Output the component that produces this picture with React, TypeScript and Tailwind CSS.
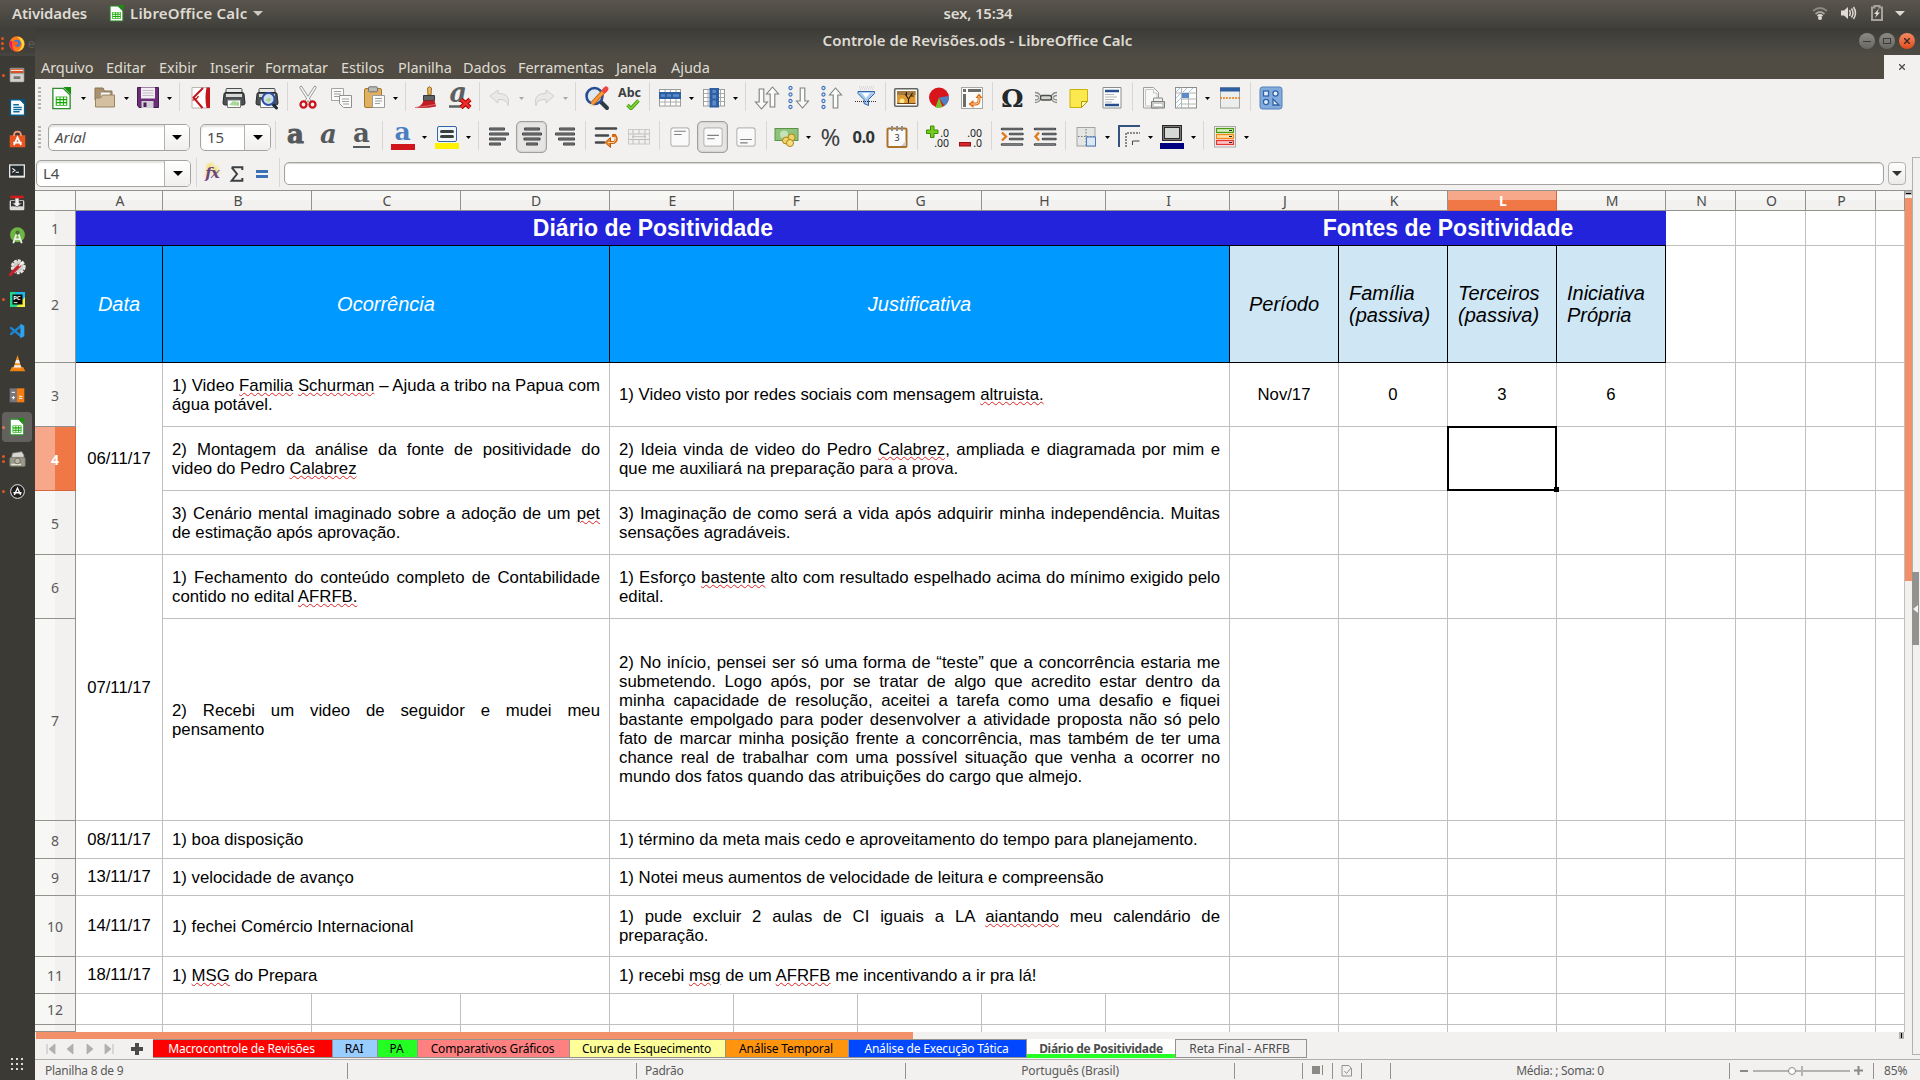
import React from "react";

type Kids = { children?: React.ReactNode };

const Svg = ({ s = 24, children }: { s?: number } & Kids) => (
  <svg width={s} height={s} viewBox="0 0 24 24" fill="none" className="block shrink-0 overflow-visible">
    {children}
  </svg>
);

/* ---------- shared document icon ---------- */
const CalcDoc = ({ s = 24 }: { s?: number }) => (
  <Svg s={s}>
    <path d="M3 1.5h11l7 7v14H3z" fill="#fdfdfd" stroke="#2e8b2e" strokeWidth="1.4" />
    <path d="M14 0h8v8z" fill="#17930b" />
    <rect x="6" y="10" width="12" height="9.5" fill="#18a303" />
    <path d="M7 11.6h3M11 11.6h2.5M14.5 11.6H17M7 14.7h3M11 14.7h2.5M14.5 14.7H17M7 17.9h3M11 17.9h2.5M14.5 17.9H17" stroke="#eaffea" strokeWidth="1.7" />
  </Svg>
);

/* ---------- toolbar building blocks ---------- */
const Slot = ({ children }: Kids) => <div className="flex h-8 w-[33px] shrink-0 items-center justify-center">{children}</div>;
const Pressed = ({ children }: Kids) => (
  <div className="flex h-8 w-[33px] shrink-0 items-center justify-center">
    <div className="flex h-8 w-[31px] items-center justify-center rounded-[5px] border border-[#a09f9b] bg-[#e6e5e3] shadow-[inset_0_0_2px_#aaa]">{children}</div>
  </div>
);
const Arrow = ({ dim, narrow }: { dim?: boolean; narrow?: boolean }) => (
  <div className={`flex h-8 shrink-0 items-center justify-center ${narrow ? "w-[10px]" : "w-[11px]"}`}>
    <svg width="5" height="3" className="block">
      <path d="M0 0h5L2.5 3z" fill={dim ? "#a9a8a6" : "#000"} />
    </svg>
  </div>
);
const Sep = ({ w = "w-2" }: { w?: string }) => (
  <div className={`flex h-8 shrink-0 justify-center ${w}`}>
    <div className="h-[29px] w-px bg-[#d9d7d5]" />
  </div>
);
const Grip = () => (
  <div className="flex h-6 w-[10px] shrink-0 flex-col items-start gap-[2px] pl-[3px] pt-px">
    {[0, 1, 2, 3, 4, 5].map((i) => (
      <div key={i} className="h-[2px] w-[3px] bg-[#b5b3b0]" />
    ))}
  </div>
);

/* ---------- standard toolbar icons ---------- */
const OpenIcon = () => (
  <Svg>
    <path d="M2 2h8l1.5 3H19v9H2z" fill="#a8916c" stroke="#8b7350" />
    <path d="M8 6.500h9v6H8z" fill="#fff" stroke="#b9b9b9" strokeWidth=".8" />
    <path d="M2.500 21V12h5l2-3H21.500v12z" fill="#d4c0a0" stroke="#9a8360" />
  </Svg>
);
const SaveIcon = () => (
  <Svg>
    <path d="M1.500 1.500h21v20H3l-1.500-2z" fill="#6b2f77" stroke="#421c4c" />
    <rect x="5" y="1.500" width="14" height="11" fill="#f3eef4" />
    <path d="M6.500 4.500h11M6.500 7h11M6.500 9.500h11" stroke="#c3bbc6" />
    <rect x="5.500" y="15" width="12" height="7" fill="#d5d0d8" />
    <rect x="7.500" y="16.500" width="3" height="4.500" fill="#4b2155" />
  </Svg>
);
const PdfIcon = () => (
  <Svg>
    <path d="M3 1.500h17.500v20.500H3z" fill="#fff" stroke="#b8b7b4" />
    <path d="M17.500 1.500h3.500v20.500h-3.500q-2-10 0-20.500z" fill="#c3161c" />
    <path d="M14 2L4.500 11.500 13.500 22" stroke="#c3161c" strokeWidth="2" />
    <path d="M3.500 14q4 0 6-4" stroke="#c3161c" strokeWidth="1.300" />
  </Svg>
);
const PrinterBody = () => (
  <>
    <rect x="4" y="2.500" width="16" height="6" rx="1" fill="#e8e8e6" stroke="#4a4f50" />
    <path d="M2 8q0-1.500 2-1.500h16q2 0 2 1.500l1 9q0 2-2 2H3q-2 0-2-2z" fill="#4b5152" stroke="#262a2b" />
    <path d="M4 8h16v3H4z" fill="#d8dad8" />
    <path d="M5.500 14h13v7.500h-13z" fill="#fff" stroke="#777" />
  </>
);
const PrintIcon = () => (
  <Svg>
    <PrinterBody />
    <path d="M7 19l4-4 6 1v4z" fill="#a8d899" />
  </Svg>
);
const PreviewIcon = () => (
  <Svg>
    <PrinterBody />
    <path d="M17 17.500l4.500 4.500" stroke="#1c2a38" strokeWidth="3" strokeLinecap="round" />
    <circle cx="13.500" cy="13" r="6" fill="#cfe0ea" stroke="#2d4fa8" strokeWidth="2" />
    <path d="M10.500 14.500l3-3 3 1.500-2 3z" fill="#a9d29d" />
  </Svg>
);
const CutIcon = () => (
  <Svg>
    <path d="M5 1.500l9 14M19 1.500l-9 14" stroke="#8a8d8b" strokeWidth="3.200" strokeLinecap="round" />
    <path d="M5 1.500l9 14M19 1.500l-9 14" stroke="#f4f4f3" strokeWidth="1.600" strokeLinecap="round" />
    <ellipse cx="7.500" cy="18.500" rx="3" ry="3.200" stroke="#c9151b" strokeWidth="2.300" />
    <ellipse cx="16.500" cy="18.500" rx="3" ry="3.200" stroke="#c9151b" strokeWidth="2.300" />
  </Svg>
);
const CopyIcon = () => (
  <Svg>
    <path d="M2.500 2.500h12v12h-12z" fill="#fbfbfa" stroke="#a3a5a2" />
    <path d="M5 5.500h7M5 8h7M5 10.500h5" stroke="#9fa19e" />
    <path d="M10.500 9.500h12v12h-8l-4-4z" fill="#fbfbfa" stroke="#8f918e" />
    <path d="M13 13h7M13 15.500h7M14 18h6" stroke="#9fa19e" />
  </Svg>
);
const PasteIcon = () => (
  <Svg>
    <rect x="2.500" y="2.500" width="17" height="19" rx="1.500" fill="#e0b163" stroke="#a8782a" />
    <rect x="6.500" y=".8" width="9" height="5" rx="1" fill="#b8bab6" stroke="#717370" />
    <path d="M10.500 9.500h12v12h-12z" fill="#fbfbfa" stroke="#9b9d9a" />
    <path d="M13 12.500h7M13 15h7M13 17.500h5" stroke="#9fa19e" />
  </Svg>
);
const BrushIcon = () => (
  <Svg>
    <path d="M12.500 2q2-2.500 4 0l-.5 7h-3z" fill="#e6b765" stroke="#9b6c1e" />
    <path d="M8.500 9.500h11v5h-11z" fill="#5b6365" stroke="#33393b" />
    <path d="M8.500 14.500h11l1.500 6q-9 2-20 1.500 6-2 7.500-7.500z" fill="#c01d22" />
    <path d="M0 21.500q12-1 20-3" stroke="#e36a6d" />
  </Svg>
);
const ClearIcon = () => (
  <div className="relative h-6 w-6">
    <span className="absolute -top-[7px] left-[2px] font-['DejaVu_Serif',serif] text-[27px] leading-none font-bold text-[#5c6062] italic">a</span>
    <svg width="24" height="24" viewBox="0 0 24 24" className="absolute inset-0">
      <path d="M1 20.500h12" stroke="#5c6062" strokeWidth="2.500" />
      <path d="M13 13.500l9 8M22 13.500l-9 8" stroke="#a40000" strokeWidth="4.500" />
      <path d="M13 13.500l9 8M22 13.500l-9 8" stroke="#ef2b2b" strokeWidth="2.500" />
    </svg>
  </div>
);
const UndoIcon = ({ flip }: { flip?: boolean }) => (
  <Svg>
    <g transform={flip ? "translate(24 0) scale(-1 1)" : undefined}>
      <path d="M2 10l8-6v3.500c8 0 12 3 10 12-1-5-4-6-10-6V17z" fill="#e9e9e7" stroke="#cfcecc" />
    </g>
  </Svg>
);
const FindIcon = () => (
  <Svg>
    <path d="M15 15l7 7" stroke="#2e3a44" strokeWidth="4" strokeLinecap="round" />
    <circle cx="9.500" cy="10" r="8" fill="#dfe8ef" stroke="#2a4c94" strokeWidth="2.600" />
    <path d="M7 18L20 4" stroke="#c4600a" strokeWidth="4.600" />
    <path d="M7 18L20 4" stroke="#f79a3c" strokeWidth="2.600" />
    <path d="M19.500 4.500l1.500-1.500" stroke="#ef4444" strokeWidth="5" strokeLinecap="round" />
    <path d="M5 21l1-3.500 2.500 2z" fill="#f7e2c0" />
  </Svg>
);
const AbcIcon = () => (
  <div className="flex w-8 flex-col items-center">
    <span className="font-['Noto_Sans',sans-serif] text-[12.500px] leading-[13px] font-bold text-[#3a3f41]">Abc</span>
    <svg width="14" height="11" viewBox="0 0 14 11" className="ml-[7px]">
      <path d="M1.500 6l3.500 3.500L12.500 1.500" fill="none" stroke="#3f9b0b" strokeWidth="3.400" />
      <path d="M1.500 6l3.500 3.500L12.500 1.500" fill="none" stroke="#86dc3c" strokeWidth="1.500" />
    </svg>
  </div>
);
const RowIcon = () => (
  <Svg>
    <rect x="1.500" y="3.500" width="21" height="16.500" fill="#fff" stroke="#999b98" />
    <path d="M1.500 8h21M1.500 16h21M7 3.500V20M12.500 3.500V20M18 3.500V20" stroke="#a9aba8" />
    <rect x="1" y="6" width="22" height="7" fill="#2f5fa3" />
    <path d="M3 9.500h4M9 9.500h4M15 9.500h6" stroke="#5b8bc9" strokeWidth="2.500" />
  </Svg>
);
const ColIcon = () => (
  <Svg>
    <rect x="1.500" y="3.500" width="21" height="16.500" fill="#fff" stroke="#999b98" />
    <path d="M1.500 7.500h21M1.500 11.500h21M1.500 15.500h21M6 3.500V20M18.500 3.500V20" stroke="#a9aba8" />
    <rect x="7.500" y="2" width="9.500" height="19.500" fill="#2f5fa3" />
    <path d="M12.200 4v3M12.200 9v3.500M12.200 14.500v5" stroke="#5b8bc9" strokeWidth="3.500" />
  </Svg>
);
const upArrow = "M0-10l6 7h-3.700v13h-4.600v-13h-3.700z";
const SortIcon = () => (
  <Svg>
    <g fill="#fbfbfa" stroke="#7e817d" strokeWidth="1.100">
      <path d={upArrow} transform="translate(6.500 13) scale(1 -1)" />
      <path d={upArrow} transform="translate(17.500 11)" />
    </g>
  </Svg>
);
const DotArrow = ({ down }: { down?: boolean }) => (
  <Svg>
    {[2, 8.500, 15, 21].map((y) => (
      <circle key={y} cx="2.500" cy={y} r="1.600" fill="#e6eefa" stroke="#3c70b8" strokeWidth="1.100" />
    ))}
    <path d={upArrow} transform={down ? "translate(14.500 12) scale(1 -1)" : "translate(14.500 12)"} fill="#fbfbfa" stroke="#7e817d" strokeWidth="1.100" />
  </Svg>
);
const FilterIcon = () => (
  <Svg>
    <path d="M5 1h15M6 3h13" stroke="#c5c5c5" strokeDasharray="1 1" />
    <path d="M4 5.500h16.500v2l-6 6v6l-4.500-2v-4l-6-6z" fill="#a9cbf0" stroke="#3263a8" />
    <path d="M8 7h8l-4 5z" fill="#fff" />
    <path d="M1 15.500h22" stroke="#333" strokeDasharray="1 1" />
  </Svg>
);
const ImageIcon = () => (
  <Svg>
    <rect x=".7" y="2.700" width="23" height="17.500" rx="1" fill="#fff" stroke="#62665f" strokeWidth="1.600" />
    <rect x="3" y="5" width="18.500" height="13" fill="#e09a34" />
    <path d="M3 5h18.500v4H3z" fill="#a37a40" />
    <circle cx="8" cy="15" r="2.500" fill="#fbe48a" />
    <path d="M14.500 18v-5l-3.500-5M14.500 13l4-6M16.500 10l3.500 0M12.500 10l0-4" stroke="#2c2212" strokeWidth="1.100" />
    <path d="M3 17.500h18.500" stroke="#6b4516" />
  </Svg>
);
const ChartIcon = () => (
  <Svg>
    <circle cx="12" cy="11.500" r="10" fill="#d8151b" />
    <path d="M12 11.500l10-1.500q0 7-4.500 10z" fill="#5080c4" />
    <path d="M12 11.500l3.500 9.500q-4 1.500-7 .3z" fill="#74c22c" />
  </Svg>
);
const PivotIcon = () => (
  <Svg>
    <rect x="1.500" y="1.500" width="21" height="21" fill="#fbfbfa" stroke="#a5a7a3" />
    <path d="M3 4.500h3M8 4.500h13" stroke="#6a6d6a" strokeWidth="3" />
    <path d="M4.500 8v13" stroke="#6a6d6a" strokeWidth="3" />
    <path d="M12 18h4q3 0 3-4v-3" stroke="#e06a10" strokeWidth="2.800" />
    <path d="M13.500 14v8l-5-4zM15.500 12h7L19 7.500z" fill="#e06a10" />
    <path d="M11 18h5q3 0 3-4v-4" stroke="#fbd9b3" strokeWidth="1" />
  </Svg>
);
const LinkIcon = () => (
  <Svg>
    <path d="M1 6.500q4 0 6 4h4M1 16.500q4 0 6-4h4M23 6.500q-4 0-6 4h-4M23 16.500q-4 0-6-4h-4M1 9.500q3 0 4 2M23 9.500q-3 0-4 2M1 14q3 0 4-2M23 14q-3 0-4-2" stroke="#8a8e89" strokeWidth="1.300" />
    <rect x="6.500" y="9.500" width="11" height="4.500" rx="2" stroke="#4b4f4b" strokeWidth="1.300" fill="#d3d6d1" />
  </Svg>
);
const NoteIcon = () => (
  <Svg>
    <path d="M3 3.500h17.500v12l-6 6H3z" fill="#fbe94f" stroke="#c9b20a" />
    <path d="M20.500 15.500h-6v6z" fill="#fff7b0" stroke="#b29d06" />
  </Svg>
);
const HeaderFooterIcon = () => (
  <Svg>
    <path d="M3 1.500h18v20.500H3z" fill="#fdfdfd" stroke="#8b8e8a" />
    <path d="M5 5h14M5 19h14" stroke="#274f8f" strokeWidth="2.400" />
    <path d="M5 8.500h9M5 11h12M5 13.500h9M5 16h7" stroke="#b5b7b4" />
  </Svg>
);
const PrintAreaIcon = () => (
  <Svg>
    <path d="M2.500 1.500h10l5 5v15.500h-15z" fill="#f8f8f7" stroke="#9da09c" />
    <path d="M4.500 3.500h8v3.500h3.500v13H4.500z" stroke="#c5c7c4" />
    <path d="M12.500 12h9v5h-9z" fill="#eee" stroke="#8d908c" />
    <path d="M10.500 15.500h13v6.500h-13z" fill="#c9cbc8" stroke="#7b7e7a" />
    <path d="M13 19h8" stroke="#fff" strokeWidth="2" />
  </Svg>
);
const FreezeIcon = () => (
  <Svg>
    <rect x="1.500" y="1.500" width="21" height="20.500" fill="#fdfdfd" stroke="#8b8e8a" />
    <path d="M2 6l4-4M2 12l5-5M2 17l5-5M3 21l4-4M9 6l4-4M15 6l4-4" stroke="#9bbce6" strokeWidth=".9" />
    <path d="M7.500 1.500V22M14.500 7v15M1.500 7h21M7.500 13h15M7.500 18h15" stroke="#b3b5b2" />
    <rect x="8" y="7" width="7" height="5" fill="#5b8bc9" />
  </Svg>
);
const SplitIcon = () => (
  <Svg>
    <rect x="2.500" y="1.500" width="19" height="20.500" fill="#eceded" stroke="#a4a6a3" />
    <rect x="2" y="1.500" width="20" height="4" fill="#2f5fa3" />
    <path d="M2 12h21" stroke="#ef7a0c" strokeWidth="1.400" strokeDasharray="2 1" />
  </Svg>
);
const DrawIcon = () => (
  <Svg>
    <rect x="1" y="1" width="22" height="22" rx="2.500" fill="#82aadb" stroke="#5181bd" />
    <g fill="#e3edf8" stroke="#2f62a8" strokeWidth="1.300">
      <rect x="4.500" y="5" width="5" height="5" />
      <circle cx="16.500" cy="7.500" r="2.600" />
      <circle cx="7" cy="16" r="2.600" />
      <path d="M14 13v6h6z" />
    </g>
  </Svg>
);

/* ---------- formatting toolbar icons ---------- */
const SerifA = ({ cls }: { cls: string }) => (
  <span className={`-mt-[6px] font-['DejaVu_Serif',serif] text-[26px] leading-none font-bold text-[#55595b] ${cls}`}>a</span>
);
const AlignIcon = ({ rows }: { rows: [number, number][] }) => (
  <Svg>
    {rows.map(([x, w], i) => (
      <g key={i}>
        <rect x={x} y={2.500 + i * 5} width={w} height="3" rx="1" fill="#3a3c3e" />
        <rect x={x + 1} y={3.500 + i * 5} width={w - 2} height="1" fill="#85888a" />
      </g>
    ))}
  </Svg>
);
const leftRows: [number, number][] = [[2, 16], [2, 20], [2, 17], [2, 12]];
const centerRows: [number, number][] = [[4, 16], [2, 20], [3.5, 17], [6, 12]];
const rightRows: [number, number][] = [[6, 16], [2, 20], [5, 17], [10, 12]];
const ColorBar = ({ color, children }: { color: string } & Kids) => (
  <div className="flex flex-col items-center">
    {children}
    <div className={`h-[6px] w-6 ${color}`} />
  </div>
);
const WrapIcon = () => (
  <Svg>
    <path d="M2 3.500h20M2 10.500h12M2 17.500h8" stroke="#45484a" strokeWidth="2.600" strokeLinecap="round" />
    <path d="M18 10.500h3q3 4-1 7h-4" stroke="#d4650d" strokeWidth="2.800" />
    <path d="M16.500 12.500v10L11 17.500z" fill="#e8872b" stroke="#b8540a" />
    <path d="M14 17.500h6q3-2.500 1-6" stroke="#fbd9b3" strokeWidth=".9" />
  </Svg>
);
const MergeIcon = () => (
  <Svg>
    <rect x="1.500" y="4.500" width="21" height="14.500" fill="#f0f0ef" stroke="#cbcac8" />
    <path d="M1.500 9h21M1.500 14.500h21M6 4.500V9M12 4.500V9M18 4.500V9M6 14.500V19M12 14.500V19M18 14.500V19M5 11.700h14M7 10l-2 1.700L7 13.500M17 10l2 1.700-2 1.800" stroke="#bfbebc" />
  </Svg>
);
const VAlign = ({ y }: { y: number }) => (
  <Svg s={20}>
    <rect x="1" y="1" width="22" height="22" rx="3" fill="#fafafa" stroke="#bbb9b6" strokeWidth="1.400" />
    <path d={`M5 ${y}h14M5 ${y + 4}h9`} stroke="#7f817e" strokeWidth="1.300" />
  </Svg>
);
const CurrencyIcon = () => (
  <Svg>
    <rect x="0" y="3.500" width="23" height="12" fill="#8fc27c" stroke="#5c9447" />
    <circle cx="9" cy="9.500" r="4" fill="#c5e2b8" />
    <circle cx="16.500" cy="12.500" r="3.500" fill="#f0d268" stroke="#a98711" />
    <circle cx="11" cy="15.500" r="3.500" fill="#f0d268" stroke="#a98711" />
    <circle cx="15" cy="18" r="3.500" fill="#f6dd80" stroke="#a98711" />
  </Svg>
);
const DateIcon = () => (
  <Svg>
    <rect x="2.500" y="3.500" width="19" height="18.500" rx="1" fill="#fafafa" stroke="#a9742a" strokeWidth="2" />
    <path d="M7 1v5M12 1v5M17 1v5" stroke="#8b8e8a" strokeWidth="2" />
    <text x="12" y="16" textAnchor="middle" fontSize="9" fill="#333" fontFamily="Noto Sans, sans-serif">3</text>
    <path d="M16 21l5-5v5z" fill="#ccc" />
  </Svg>
);
const DecimalIcon = ({ del }: { del?: boolean }) => (
  <Svg>
    {del ? <rect x=".5" y="17.500" width="11" height="3.500" fill="#d8262b" stroke="#9b1014" /> : <path d="M4.500 1h3.500v4h4v3.500h-4v4H4.500v-4h-4V5h4z" fill="#74cc1d" stroke="#3f8a05" />}
    <text x="23" y="11.500" textAnchor="end" fontSize="10.500" fill="#222" fontFamily="Noto Sans, sans-serif">{del ? ".00" : ".0"}</text>
    <text x="23" y="22" textAnchor="end" fontSize="10.500" fill="#222" fontFamily="Noto Sans, sans-serif">{del ? ".0" : ".00"}</text>
  </Svg>
);
const IndentIcon = ({ out }: { out?: boolean }) => (
  <Svg>
    <path d="M2 4h20M10 9h12.500M10 14h12.500M2 19.500h20" stroke="#45484a" strokeWidth="2.500" strokeLinecap="round" />
    <path d="M2 4h20M10 9h12.500M10 14h12.500M2 19.500h20" stroke="#85888a" strokeWidth=".8" />
    <path d={out ? "M6 7.500L2.500 11.500 6 15.500" : "M2 7.500l4 4-4 4"} stroke="#e07a1c" strokeWidth="2.400" />
  </Svg>
);
const BordersIcon = () => (
  <Svg>
    <rect x="3" y="2.500" width="18" height="18.500" fill="#e4e6e4" stroke="#a2a5a1" />
    <path d="M12 4v17M4 11.500h17" stroke="#777" strokeDasharray="1.500 1.500" />
    <rect x="12.500" y="12" width="9" height="9" fill="#dce8f5" stroke="#4a7cbc" />
  </Svg>
);
const BorderStyleIcon = () => (
  <Svg>
    <path d="M2 22V1h21" stroke="#33527c" strokeWidth="2" />
    <path d="M9 22V8h14" stroke="#222" strokeDasharray="2 1" />
    <path d="M15.500 20v-4h7" stroke="#444" />
  </Svg>
);
const BorderColorIcon = () => (
  <ColorBar color="bg-[#00007f]">
    <div className="mb-[2px] flex h-4 w-5 border-[3px] border-[#2a2a2a] bg-[#d5d9d5] outline-1 -outline-offset-2 outline-[#777]" />
  </ColorBar>
);
const CondIcon = () => (
  <Svg>
    <rect x="1.500" y="1.500" width="21" height="20.500" fill="#fafafa" stroke="#a5a7a3" />
    <rect x="3.500" y="3.500" width="17" height="4" fill="#d4efc0" stroke="#4c9a10" strokeWidth="1.300" />
    <rect x="3.500" y="9.500" width="17" height="4" fill="#ffe0ae" stroke="#ef8a12" strokeWidth="1.300" />
    <rect x="3.500" y="15.500" width="17" height="4" fill="#ffc4c4" stroke="#e33535" strokeWidth="1.300" />
    <path d="M16 5.500h3M16 11.500h3M16 17.500h3" stroke="#222" />
  </Svg>
);

const Combo = ({ text, italic, w, inner, h }: { text: string; italic?: boolean; w: string; inner: string; h: string }) => (
  <div className={`flex shrink-0 overflow-hidden rounded-[5px] border border-[#a5a39f] bg-white shadow-[inset_0_2px_2px_#e2e2e0] ${w} ${h}`}>
    <div className={`flex items-center pl-[6px] text-[15px] text-[#4b4b4b] ${inner} ${italic ? "italic" : ""}`}>{text}</div>
    <div className="flex flex-1 items-center justify-center border-l border-[#b4b2af] bg-gradient-to-b from-white to-[#f0efed]">
      <svg width="10" height="5">
        <path d="M0 0h10L5 5z" fill="#000" />
      </svg>
    </div>
  </div>
);

/* ---------- dock ---------- */
const dockIcons: { dots: number; active?: boolean; icon: React.ReactNode }[] = [
  { dots: 3, icon: <Svg s={16}><circle cx="12" cy="12" r="11.500" fill="#ff7a18" /><path d="M12 1a11 11 0 0 1 11 11q-1 9-10 11 8-6 6-13-2-6-7-9z" fill="#ffd93b" /><path d="M1 8q-1 13 10 15.500Q3 20 5 8z" fill="#e5136a" /><circle cx="12" cy="11" r="5.500" fill="#2b7de0" /><path d="M5 9l7-1 3 4-5 2 3 3q-7 1-8-8z" fill="#ff5a1f" /></Svg> },
  { dots: 1, icon: <Svg s={16}><rect x="1" y="1" width="22" height="22" rx="2" fill="#8e8c88" /><rect x="3" y="3" width="18" height="6" fill="#d9521d" /><path d="M3 5h18" stroke="#fff" strokeWidth="1.500" /><rect x="2" y="10" width="20" height="12" fill="#d2d0cc" /><rect x="7" y="14" width="10" height="4" fill="#77746f" /></Svg> },
  { dots: 0, icon: <Svg s={17}><path d="M2 1h14l6 6v16H2z" fill="#fff" stroke="#0b5a86" strokeWidth="2" /><path d="M16 0h7v8z" fill="#0a4f78" /><path d="M6 8h8M6 12h12M6 15h12M6 18h9" stroke="#0e6a9d" strokeWidth="2" /></Svg> },
  { dots: 0, icon: <Svg s={17}><path d="M1 6h22v17H1z" fill="#e95420" /><path d="M7 7q0-6 5-6t5 6" stroke="#f19a78" strokeWidth="2.500" /><path d="M7 20l5-11 5 11M6 16.500h12" stroke="#fff" strokeWidth="2.400" /></Svg> },
  { dots: 0, icon: <Svg s={16}><rect x="0" y="2" width="24" height="20" fill="#e8e8e6" /><rect x="2" y="4" width="20" height="15" fill="#252a2c" /><path d="M5 8l4 3-4 3M10 14h5" stroke="#fff" strokeWidth="1.600" /></Svg> },
  { dots: 0, icon: <Svg s={16}><rect x="1" y="8" width="22" height="15" rx="2" fill="#dcdcda" /><rect x="3" y="9" width="18" height="8" fill="#333" /><path d="M9 4h6v8h4l-7 6-7-6h4z" fill="#eee" stroke="#555" /><path d="M2 1h20v4H2z" fill="#cf1b1b" /></Svg> },
  { dots: 0, icon: <Svg s={17}><circle cx="12" cy="11" r="10.500" fill="#6fb544" /><path d="M12 6l6 17M12 6L6 23M8 16q4 3 8 0" stroke="#e9efe6" strokeWidth="2.600" /><circle cx="12" cy="8" r="3" fill="#4a6c38" /></Svg> },
  { dots: 0, icon: <Svg s={17}><circle cx="13" cy="11" r="8.500" stroke="#e4e4e2" strokeWidth="4" strokeDasharray="4 1.500" fill="#c9c9c6" /><path d="M2 22l13-13" stroke="#c3202a" strokeWidth="4.500" strokeLinecap="round" /><path d="M14 10l5-5" stroke="#fff" strokeWidth="2" /></Svg> },
  { dots: 1, icon: <Svg s={15}><rect width="24" height="24" fill="#21d789" /><path d="M8 0h16v24H12z" fill="#1fb6e8" /><path d="M10 24h14V8z" fill="#f4ee3f" /><rect x="4" y="4" width="16" height="16" fill="#0b0b0b" /><text x="5" y="13" fontSize="9.500" fontWeight="bold" fill="#fff" fontFamily="Noto Sans, sans-serif">PC</text><path d="M6 17h6" stroke="#fff" strokeWidth="1.500" /></Svg> },
  { dots: 0, icon: <Svg s={16}><path d="M18 4.500L3 16.500M18 19.500L3 7.500" stroke="#1c86cf" strokeWidth="3.400" strokeLinecap="round" /><path d="M17 1l6 3v16l-6 3z" fill="#2fa2ee" /></Svg> },
  { dots: 0, icon: <Svg s={17}><path d="M4 17h16l3 6H1z" fill="#f08010" /><path d="M12 0l6 19H6z" fill="#f7921e" /><path d="M10 7h4l1.500 4.500h-7zM7.500 14.500h9l1 3h-11z" fill="#eee" /></Svg> },
  { dots: 0, icon: <Svg s={16}><rect x="1" y="2" width="11" height="21" fill="#77767a" /><rect x="12" y="2" width="11" height="21" fill="#f57c10" /><path d="M4 8h5M4 16h5M6.500 13.500v5M15 14h5M15 17h5" stroke="#fff" strokeWidth="1.500" /></Svg> },
  { dots: 1, active: true, icon: <CalcDoc s={18} /> },
  { dots: 2, icon: <Svg s={17}><path d="M5 3l13-2 3 5v6H3z" fill="#d9d7cf" stroke="#8f8c80" /><rect x="1" y="9" width="22" height="13" rx="2" fill="#9b9989" stroke="#6c6a5e" /><path d="M3 19h14" stroke="#e8e5d8" strokeWidth="2" /><circle cx="12" cy="14" r="4" fill="#bbb8a6" stroke="#55534a" /></Svg> },
  { dots: 1, icon: <Svg s={15}><circle cx="12" cy="12" r="11" fill="#1f1f1f" stroke="#e8e8e8" strokeWidth="1.600" /><path d="M7 17.500l5-11 5 11M5.500 14h13" stroke="#fff" strokeWidth="2.200" /></Svg> },
];

const Dock = () => (
  <div className="flex w-[35px] shrink-0 flex-col bg-[#3b3a35]">
    {dockIcons.map((d, i) => (
      <div key={i} className={`relative flex items-center ${i === 0 ? "h-[31px] bg-[linear-gradient(#403f3a_25px,#45443f_25px,#45443f_28px,#3b3a35_28px)]" : "h-8"}`}>
        <div className="relative flex w-[6px] flex-col items-center gap-[2px]">
          {Array.from({ length: d.dots }, (_, k) => (
            <div key={k} className="h-[3px] w-[3px] rounded-full bg-[#e2571f]" />
          ))}
        </div>
        {d.active && <div className="absolute top-px left-[2px] h-[30px] w-[30px] rounded-[4px] bg-white/20" />}
        <div className="relative flex w-[22px] justify-center">{d.icon}</div>
        {i === 0 && <span className="text-[13px] text-[#5c5b56]">e</span>}
      </div>
    ))}
    <div className="mt-auto flex h-8 items-center justify-center pr-[1px]">
      <div className="grid grid-cols-3 gap-[3px]">
        {Array.from({ length: 9 }, (_, k) => (
          <div key={k} className="h-[2px] w-[2px] bg-[#dddcd8]" />
        ))}
      </div>
    </div>
  </div>
);

/* ---------- spreadsheet ---------- */
type Cell = { c: number; r: number; cs?: number; rs?: number; kind?: string; lines?: React.ReactNode[] };
const Sp = ({ children }: Kids) => <span className="underline decoration-[#e02020] decoration-wavy decoration-[0.8px] underline-offset-1">{children}</span>;
const cols = "ABCDEFGHIJKLMNOP".split("");
const rowNums = [1, 2, 3, 4, 5, 6, 7, 8, 9, 10, 11, 12];

const content: Cell[] = [
  { c: 1, r: 1, cs: 9, kind: "title", lines: ["Diário de Positividade"] },
  { c: 10, r: 1, cs: 4, kind: "title", lines: ["Fontes de Positividade"] },
  { c: 1, r: 2, kind: "blue", lines: ["Data"] },
  { c: 2, r: 2, cs: 3, kind: "blue", lines: ["Ocorrência"] },
  { c: 5, r: 2, cs: 5, kind: "blue", lines: ["Justificativa"] },
  { c: 10, r: 2, kind: "lightCenter", lines: ["Período"] },
  { c: 11, r: 2, kind: "light", lines: ["Família", "(passiva)"] },
  { c: 12, r: 2, kind: "light", lines: ["Terceiros", "(passiva)"] },
  { c: 13, r: 2, kind: "light", lines: ["Iniciativa", "Própria"] },
  { c: 1, r: 3, rs: 3, kind: "center", lines: ["06/11/17"] },
  { c: 1, r: 6, rs: 2, kind: "center", lines: ["07/11/17"] },
  { c: 1, r: 8, kind: "center", lines: ["08/11/17"] },
  { c: 1, r: 9, kind: "center", lines: ["13/11/17"] },
  { c: 1, r: 10, kind: "center", lines: ["14/11/17"] },
  { c: 1, r: 11, kind: "center", lines: ["18/11/17"] },
  { c: 2, r: 3, cs: 3, kind: "text", lines: [<>1) Video <Sp>Familia</Sp> <Sp>Schurman</Sp> – Ajuda a tribo na Papua com</>, "água potável."] },
  { c: 2, r: 4, cs: 3, kind: "text", lines: ["2) Montagem da análise da fonte de positividade do", <>video do Pedro <Sp>Calabrez</Sp></>] },
  { c: 2, r: 5, cs: 3, kind: "text", lines: [<>3) Cenário mental imaginado sobre a adoção de um <Sp>pet</Sp></>, "de estimação após aprovação."] },
  { c: 2, r: 6, cs: 3, kind: "text", lines: ["1) Fechamento do conteúdo completo de Contabilidade", <>contido no edital <Sp>AFRFB.</Sp></>] },
  { c: 2, r: 7, cs: 3, kind: "text", lines: ["2) Recebi um video de seguidor e mudei meu", "pensamento"] },
  { c: 2, r: 8, cs: 3, kind: "text", lines: ["1) boa disposição"] },
  { c: 2, r: 9, cs: 3, kind: "text", lines: ["1) velocidade de avanço"] },
  { c: 2, r: 10, cs: 3, kind: "text", lines: ["1) fechei Comércio Internacional"] },
  { c: 2, r: 11, cs: 3, kind: "text", lines: [<>1) <Sp>MSG</Sp> do Prepara</>] },
  { c: 5, r: 3, cs: 5, kind: "text", lines: [<>1) Video visto por redes sociais com mensagem <Sp>altruista.</Sp></>] },
  { c: 5, r: 4, cs: 5, kind: "text", lines: [<>2) Ideia vinda de video do Pedro <Sp>Calabrez</Sp>, ampliada e diagramada por mim e</>, "que me auxiliará na preparação para a prova."] },
  { c: 5, r: 5, cs: 5, kind: "text", lines: ["3) Imaginação de como será a vida após adquirir minha independência. Muitas", "sensações agradáveis."] },
  { c: 5, r: 6, cs: 5, kind: "text", lines: [<>1) Esforço <Sp>bastente</Sp> alto com resultado espelhado acima do mínimo exigido pelo</>, "edital."] },
  {
    c: 5, r: 7, cs: 5, kind: "text",
    lines: [
      "2) No início, pensei ser só uma forma de “teste” que a concorrência estaria me",
      "submetendo. Logo após, por se tratar de algo que acredito estar dentro da",
      "minha capacidade de resolução, aceitei a tarefa como uma desafio e fiquei",
      "bastante empolgado para poder desenvolver a atividade proposta não só pelo",
      "fato de marcar minha posição frente a concorrência, mas também de ter uma",
      "chance real de trabalhar com uma possível situação que venha a ocorrer no",
      "mundo dos fatos quando das atribuições do cargo que almejo.",
    ],
  },
  { c: 5, r: 8, cs: 5, kind: "text", lines: ["1) término da meta mais cedo e aproveitamento do tempo para planejamento."] },
  { c: 5, r: 9, cs: 5, kind: "text", lines: ["1) Notei meus aumentos de velocidade de leitura e compreensão"] },
  { c: 5, r: 10, cs: 5, kind: "text", lines: [<>1) pude excluir 2 aulas de CI iguais a LA <Sp>aiantando</Sp> meu calendário de</>, "preparação."] },
  { c: 5, r: 11, cs: 5, kind: "text", lines: [<>1) recebi <Sp>msg</Sp> de um <Sp>AFRFB</Sp> me incentivando a ir pra lá!</>] },
  { c: 10, r: 3, kind: "center", lines: ["Nov/17"] },
  { c: 11, r: 3, kind: "center", lines: ["0"] },
  { c: 12, r: 3, kind: "center", lines: ["3"] },
  { c: 13, r: 3, kind: "center", lines: ["6"] },
  { c: 12, r: 4, kind: "cursor" },
];
const taken = new Set<string>();
content.forEach((x) => {
  for (let i = 0; i < (x.cs ?? 1); i++) for (let j = 0; j < (x.rs ?? 1); j++) taken.add(`${x.c + i}:${x.r + j}`);
});
const blanks: Cell[] = [];
for (let r = 1; r <= 13; r++) for (let c = 1; c <= 17; c++) if (!taken.has(`${c}:${r}`)) blanks.push({ c, r });

const kinds: Record<string, string> = {
  title: "items-center justify-center border-b border-black bg-[#2323dc] text-[23px] font-bold text-white",
  blue: "items-center justify-center border-r border-b border-black bg-[#0099ff] text-[20px] italic text-white",
  lightCenter: "items-center justify-center border-r border-b border-black bg-[#cfe7f5] text-[20px] italic leading-[22px] text-black",
  light: "items-start justify-center border-r border-b border-black bg-[#cfe7f5] pl-[10px] text-[20px] italic leading-[22px] text-black",
  center: "items-center justify-center border-r border-b border-[#c0c0c0] text-[16.700px] text-black",
  text: "items-stretch justify-center border-r border-b border-[#c0c0c0] px-[9px] text-[16.770px] leading-[19px] text-black",
  cursor: "relative border-r border-b border-[#c0c0c0]",
  blank: "border-r border-b border-[#c0c0c0]",
};

const GridCell = ({ cell }: { cell: Cell }) => {
  const { c, r, cs = 1, rs = 1, kind = "blank", lines = [] } = cell;
  return (
    <div
      className={`flex min-w-0 flex-col overflow-visible whitespace-nowrap ${kinds[kind]}`}
      style={{ gridColumn: `${c + 1} / span ${cs}`, gridRow: `${r + 1} / span ${rs}` }}
    >
      {lines.map((l, i) => (
        <div key={i} className={kind === "text" && i < lines.length - 1 ? "[text-align-last:justify] whitespace-normal" : ""}>{l}</div>
      ))}
      {kind === "cursor" && (
        <div className="absolute -top-px -right-px -bottom-px -left-px border-2 border-black">
          <div className="absolute -right-[4px] -bottom-[3px] h-[5px] w-[5px] bg-black" />
        </div>
      )}
    </div>
  );
};

const Sheet = () => (
  <div className="grid h-[842px] w-[1870px] shrink-0 grid-cols-[41px_87px_149px_149px_149px_124px_124px_124px_124px_124px_109px_109px_109px_109px_70px_70px_70px_29px] grid-rows-[20px_35px_117px_64px_64px_64px_64px_202px_38px_37px_61px_37px_31px_7px] overflow-hidden border-t border-[#94928f] bg-white font-['Liberation_Sans',Arial,sans-serif]">
    <div className="border-r border-b border-[#94928f] bg-[#f7f7f5]" />
    {[...cols, ""].map((l) => (
      <div
        key={l}
        className={`flex items-center justify-center border-r border-b pl-[2px] font-['Noto_Sans',sans-serif] text-[14px] leading-[19px] ${l === "L" ? "border-[#d4673b] bg-[linear-gradient(#f7a88b_50%,#f07746_50%)] font-bold text-white" : "border-[#94928f] bg-[linear-gradient(#f7f7f5_50%,#f2f1f0_50%)] text-[#4c4c4c]"}`}
      >
        {l}
      </div>
    ))}
    {[...rowNums, 13].map((n) => (
      <div
        key={n}
        style={{ gridColumn: 1, gridRow: n + 1 }}
        className={`flex items-center justify-center border-r border-b pt-px font-['Noto_Sans',sans-serif] text-[14px] ${n === 4 ? "border-[#d4673b] bg-[linear-gradient(90deg,#f7a88b_50%,#f07746_50%)] font-bold text-white" : "border-[#94928f] bg-[linear-gradient(90deg,#f7f7f5_50%,#f2f1f0_50%)] text-[#5a5a5a]"}`}
      >
        {n < 13 ? n : ""}
      </div>
    ))}
    {blanks.map((b) => (
      <GridCell key={`${b.c}-${b.r}`} cell={b.r === 13 ? { ...b, kind: "stub" } : b} />
    ))}
    {content.map((b) => (
      <GridCell key={`${b.c}-${b.r}`} cell={b} />
    ))}
  </div>
);
kinds.stub = "border-r border-[#c0c0c0]";

const menus: [string, string][] = [
  ["Arquivo", "w-[65px]"], ["Editar", "w-[53px]"], ["Exibir", "w-[51px]"], ["Inserir", "w-[55px]"], ["Formatar", "w-[76px]"], ["Estilos", "w-[57px]"],
  ["Planilha", "w-[65px]"], ["Dados", "w-[55px]"], ["Ferramentas", "w-[98px]"], ["Janela", "w-[55px]"], ["Ajuda", "w-[50px]"],
];
const tabs: [string, string][] = [
  ["Macrocontrole de Revisões", "w-[180px] bg-[#ff0000] text-white"],
  ["RAI", "w-[45px] bg-[#99ccff] text-black"],
  ["PA", "w-[40px] bg-[#23ff23] text-black"],
  ["Comparativos Gráficos", "w-[152px] bg-[#ff8080] text-black"],
  ["Curva de Esquecimento", "w-[156px] bg-[#ffff99] text-black"],
  ["Análise Temporal", "w-[123px] bg-[#ff950e] text-black"],
  ["Análise de Execução Tática", "w-[178px] bg-[#0047ff] text-white"],
];
const navPaths = ["M2 1v10M10 1L4 6l6 5z", "M9 1L3 6l6 5z", "M3 1l6 5-6 5z", "M2 1l6 5-6 5zM10 1v10"];

const VLine = () => <div className="h-4 w-px shrink-0 bg-[#94928f]" />;

export default function App() {
  return (
    <div className="flex h-[1080px] w-[1920px] flex-col overflow-hidden bg-[#f2f1f0] font-['Noto_Sans',sans-serif]">
      {/* desktop panel */}
      <div className="flex h-7 shrink-0 items-center bg-gradient-to-b from-[#5a564e] to-[#403f3a] pb-[2px] text-[15px] font-semibold text-[#dfdbd2]">
        <div className="flex w-[860px] items-center pl-3">
          <span className="w-[96px] tracking-[-0.150px]">Atividades</span>
          <CalcDoc s={17} />
          <span className="ml-[5px] tracking-[0.200px]">LibreOffice Calc</span>
          <svg width="10" height="5" className="ml-[5px]"><path d="M0 0h10L5 5z" fill="#ccc9c1" /></svg>
        </div>
        <div className="w-[236px] text-center tracking-[-0.200px]">sex, 15:34</div>
        <div className="flex flex-1 items-center justify-end pr-[15px]">
          <svg width="16" height="14" viewBox="0 0 16 14" fill="none">
            <path d="M1 5q7-6 14 0" stroke="#8b8880" strokeWidth="1.700" />
            <path d="M3.500 8q4.500-4 9 0" stroke="#a5a29a" strokeWidth="1.700" />
            <path d="M5.500 10q2.500-2 5 0" stroke="#dfdbd2" strokeWidth="1.700" />
            <circle cx="8" cy="12" r="2" fill="#dfdbd2" />
          </svg>
          <svg width="17" height="14" viewBox="0 0 17 14" fill="none" className="ml-3">
            <path d="M1 4.500h3L8 1v12L4 9.500H1z" fill="#dfdbd2" />
            <path d="M9.500 4q1.500 3 0 6M11.500 2.500q3 4.500 0 9M13.500 1q4 6 0 12" stroke="#dfdbd2" strokeWidth="1.500" />
          </svg>
          <svg width="12" height="16" viewBox="0 0 12 16" fill="none" className="ml-[14px]">
            <path d="M1 2.500h2.500V1h5v1.500H11V15H1z" stroke="#a5a29a" strokeWidth="2" />
            <path d="M8 3.500L3 9h2.500L4 13l5-5.500H6.500z" fill="#dfdbd2" />
          </svg>
          <svg width="10" height="5" className="ml-3"><path d="M0 0h10L5 5z" fill="#dfdbd2" /></svg>
        </div>
      </div>

      <div className="flex min-h-0 flex-1">
        <Dock />
        <div className="flex min-w-0 flex-1 flex-col">
          {/* title bar */}
          <div className="relative flex h-[27px] shrink-0 items-center justify-center bg-gradient-to-b from-[#3c3b37] to-[#4f4c45] pb-[3px] text-[15px] font-semibold text-[#dfdbd2]">
            <span className="tracking-[0.010px]">Controle de Revisões.ods - LibreOffice Calc</span>
            <div className="absolute top-[5px] right-[5px] flex gap-1">
              <div className="flex h-4 w-4 items-center justify-center rounded-full bg-gradient-to-b from-[#8b8a85] to-[#686761]"><div className="h-px w-2 bg-[#3c3b37]" /></div>
              <div className="flex h-4 w-4 items-center justify-center rounded-full bg-gradient-to-b from-[#8b8a85] to-[#686761]"><div className="h-[6px] w-2 border border-[#3c3b37]" /></div>
              <div className="flex h-4 w-4 items-center justify-center rounded-full bg-gradient-to-b from-[#f58a62] to-[#df4a16]">
                <svg width="6" height="6"><path d="M0 0l6 6M6 0L0 6" stroke="#3c2a20" strokeWidth="1.400" /></svg>
              </div>
            </div>
          </div>
          {/* menu bar */}
          <div className="flex h-6 shrink-0 bg-[#504c44] text-[14.500px] text-[#dfdbd2]">
            <div className="flex flex-1 items-center pt-[2px] pl-[6px]">
              {menus.map(([m, w]) => (
                <span key={m} className={`shrink-0 tracking-[-0.050px] ${w}`}>{m}</span>
              ))}
            </div>
            <div className="flex w-9 items-center justify-center bg-[#f2f1f0]">
              <svg width="6" height="6"><path d="M0 0l6 6M6 0L0 6" stroke="#4c4c4c" strokeWidth="1.300" /></svg>
            </div>
          </div>

          {/* standard toolbar */}
          <div className="flex h-[39px] shrink-0 items-center pb-px">
            <Grip />
            <Slot><CalcDoc s={23} /></Slot><Arrow narrow /><Slot><OpenIcon /></Slot><Arrow narrow /><Slot><SaveIcon /></Slot><Arrow /><Sep w="w-[9px]" />
            <Slot><PdfIcon /></Slot><Slot><PrintIcon /></Slot><Slot><PreviewIcon /></Slot><Sep />
            <Slot><CutIcon /></Slot><Slot><CopyIcon /></Slot><Slot><PasteIcon /></Slot><Arrow /><Sep w="w-[9px]" />
            <Slot><BrushIcon /></Slot><Slot><ClearIcon /></Slot><Sep w="w-[7px]" />
            <Slot><UndoIcon /></Slot><Arrow dim /><Slot><UndoIcon flip /></Slot><Arrow dim /><Sep w="w-[9px]" />
            <Slot><FindIcon /></Slot><Slot><AbcIcon /></Slot><Sep w="w-[7px]" />
            <Slot><RowIcon /></Slot><Arrow /><Slot><ColIcon /></Slot><Arrow /><Sep w="w-[9px]" />
            <Slot><SortIcon /></Slot><Slot><DotArrow down /></Slot><Slot><DotArrow /></Slot><Slot><FilterIcon /></Slot><Sep w="w-[7px]" />
            <Slot><ImageIcon /></Slot><Slot><ChartIcon /></Slot><Slot><PivotIcon /></Slot><Sep />
            <Slot><span className="font-['DejaVu_Serif',serif] text-[25px] leading-none font-bold text-[#24292b]">Ω</span></Slot>
            <Slot><LinkIcon /></Slot><Slot><NoteIcon /></Slot><Slot><HeaderFooterIcon /></Slot><Sep />
            <Slot><PrintAreaIcon /></Slot><Slot><FreezeIcon /></Slot><Arrow /><Slot><SplitIcon /></Slot><Sep />
            <Slot><DrawIcon /></Slot>
          </div>

          {/* formatting toolbar */}
          <div className="flex h-[39px] shrink-0 items-center pb-px">
            <Grip />
            <div className="w-[3px]" />
            <Combo text="Arial" italic w="w-[142px]" inner="w-[115px]" h="h-[27px]" />
            <div className="w-[10px]" />
            <Combo text="15" w="w-[71px]" inner="w-[43px]" h="h-[27px]" />
            <Sep />
            <Slot><SerifA cls="[-webkit-text-stroke:1px_#55595b]" /></Slot>
            <Slot><SerifA cls="italic" /></Slot>
            <Slot><SerifA cls="border-b-2 border-[#55595b] leading-[22px]" /></Slot>
            <Sep />
            <Slot>
              <ColorBar color="bg-[#d0161c]"><span className="-mt-[7px] h-[26px] font-['DejaVu_Serif',serif] text-[25px] leading-[27px] font-bold text-[#4a7ec2]">a</span></ColorBar>
            </Slot>
            <Arrow />
            <Slot>
              <ColorBar color="bg-[#fff200]">
                <div className="mb-[1px] flex h-4 w-5 flex-col justify-center gap-[2px] rounded-[2px] border border-[#3566a8] bg-[#f0f5fb] px-[2px]"><div className="h-[3px] rounded-sm bg-[#3a3f3c]" /><div className="h-[3px] rounded-sm bg-[#3a3f3c]" /></div>
              </ColorBar>
            </Slot>
            <Arrow /><Sep w="w-2" />
            <Slot><AlignIcon rows={leftRows} /></Slot><Pressed><AlignIcon rows={centerRows} /></Pressed><Slot><AlignIcon rows={rightRows} /></Slot><Sep />
            <Slot><WrapIcon /></Slot><Slot><MergeIcon /></Slot><Sep />
            <Slot><VAlign y={5} /></Slot><Pressed><VAlign y={10} /></Pressed><Slot><VAlign y={15} /></Slot><Sep />
            <Slot><CurrencyIcon /></Slot><Arrow />
            <Slot><span className="text-[24px] leading-none text-[#3d4143]">%</span></Slot>
            <Slot><span className="text-[16.500px] leading-none font-bold tracking-[-0.500px] text-[#303436]">0.0</span></Slot>
            <Slot><DateIcon /></Slot><Sep />
            <Slot><DecimalIcon /></Slot><Slot><DecimalIcon del /></Slot><Sep />
            <Slot><IndentIcon /></Slot><Slot><IndentIcon out /></Slot><Sep />
            <Slot><BordersIcon /></Slot><Arrow narrow /><Slot><BorderStyleIcon /></Slot><Arrow narrow /><Slot><BorderColorIcon /></Slot><Arrow /><Sep w="w-[9px]" />
            <Slot><CondIcon /></Slot><Arrow />
          </div>

          {/* lower area: formula bar, sheet, tabs, beside the sidebar strip */}
          <div className="flex min-h-0 flex-1">
            <div className="flex w-[1877px] shrink-0 flex-col">
              <div className="flex h-[33px] shrink-0 items-center pl-px">
                <Combo text="L4" w="w-[155px]" inner="w-[127px]" h="h-[27px]" />
                <Sep w="w-[11px]" />
                <div className="flex w-5 justify-center">
                  <span className="font-['DejaVu_Serif',serif] text-[15px] leading-none font-bold tracking-[-1px] text-[#6e4580] italic [text-shadow:0_-4px_3px_#f4dc4e]">fx</span>
                </div>
                <div className="flex w-[30px] justify-center"><Svg s={16}><path d="M4 2h16v4M4 2l8 10-8 10h16v-4" stroke="#3c4043" strokeWidth="3" /></Svg></div>
                <div className="flex w-5 flex-col items-center gap-[2px]"><div className="h-[3px] w-3 bg-[#3a70b5]" /><div className="h-[3px] w-3 bg-[#3a70b5]" /></div>
                <Sep w="w-[15px]" />
                <div className="ml-[-3px] h-[23px] w-[1600px] shrink-0 rounded-[5px] border border-[#a5a39f] bg-white shadow-[inset_0_1px_1px_#d5d5d3]" />
                <div className="ml-1 flex h-[23px] w-[18px] shrink-0 items-center justify-center rounded-[4px] border border-[#b4b2af] bg-gradient-to-b from-white to-[#ebeae8]">
                  <svg width="10" height="5"><path d="M0 0h10L5 5z" fill="#333" /></svg>
                </div>
              </div>
              <div className="flex h-[842px] shrink-0">
                <Sheet />
                <div className="flex w-[7px] flex-col">
                  <div className="mb-[3px] flex h-[5px] items-center justify-center border-t border-[#94928f] bg-[#b5b3b0]"><div className="h-px w-[5px] bg-black" /></div>
                  <div className="h-[383px] bg-[#f29069]" />
                </div>
              </div>
              <div className="flex h-[7px] shrink-0 justify-between pl-px">
                <div className="h-[7px] w-[877px] bg-[#f29069]" />
                <div className="mr-2 flex h-[7px] w-[5px] items-center justify-center bg-[#b5b3b0]"><div className="h-[5px] w-px bg-black" /></div>
              </div>
              {/* sheet tabs */}
              <div className="flex h-5 shrink-0 items-stretch pl-[10px] text-[12px]">
                <div className="flex w-[70px] items-center justify-between pb-px">
                  {navPaths.map((p) => (
                    <svg key={p} width="12" height="12" viewBox="0 0 12 12"><path d={p} fill="#b1afac" stroke="#b1afac" strokeWidth=".8" /></svg>
                  ))}
                </div>
                <div className="flex w-[38px] items-center justify-end pr-[10px]"><svg width="12" height="12"><path d="M4 0h4v4h4v4H8v4H4V8H0V4h4z" fill="#4a4a4a" /></svg></div>
                {tabs.map(([t, c], i) => (
                  <div key={t} className={`mb-px flex items-center justify-center border border-l-0 border-[#94928f] pr-[2px] tracking-[-0.180px] whitespace-nowrap ${i === 0 ? "border-l" : ""} ${c}`}>{t}</div>
                ))}
                <div className="mb-px flex w-[148px] items-center justify-center border-b-4 border-[#23ff23] bg-white pt-1 font-bold tracking-[-0.300px] whitespace-nowrap text-[#4c4c4c]">Diário de Positividade</div>
                <div className="mb-px flex w-[132px] items-center justify-center border border-[#94928f] pr-[3px] whitespace-nowrap text-[#4c4c4c]">Reta Final - AFRFB</div>
              </div>
            </div>
            {/* sidebar strip */}
            <div className="mb-1 flex flex-1 flex-col border-t border-b border-l border-[#b4b2af]">
              <div className="-ml-px mt-[414px] flex h-[73px] w-[7px] items-center bg-[#94928f]">
                <svg width="7" height="8"><path d="M6 0v8L1 4z" fill="#f2f1f0" /></svg>
              </div>
            </div>
          </div>

          {/* status bar */}
          <div className="flex h-[21px] shrink-0 items-center border-t border-[#b1afac] pt-px text-[12px] whitespace-nowrap text-[#5a5a5a]">
            <div className="w-[312px] pl-[10px] tracking-[-0.250px]">Planilha 8 de 9</div><VLine />
            <div className="w-[288px]" /><VLine />
            <div className="w-[268px] pl-2 tracking-[-0.250px]">Padrão</div><VLine />
            <div className="w-[328px] text-center tracking-[-0.130px]">Português (Brasil)</div><VLine />
            <div className="w-[67px]" /><VLine />
            <div className="flex w-[29px] justify-center gap-[2px]"><div className="h-2 w-2 bg-[#8b8985]" /><div className="-mt-px h-[10px] w-px bg-[#8b8985]" /></div><VLine />
            <div className="flex w-7 justify-center"><svg width="12" height="13" fill="none" stroke="#94928f"><path d="M1 1.500h7l2.500 3v7.500H1zM3.500 7l2 2.500L10 4" /></svg></div><VLine />
            <div className="w-[28px]" /><VLine />
            <div className="w-[338px] text-center tracking-[-0.300px]">Média: ; Soma: 0</div><VLine />
            <div className="flex w-[143px] items-center justify-between px-[10px]">
              <div className="h-[2px] w-2 bg-[#8b8985]" />
              <div className="relative h-[2px] w-[97px] bg-[#b4b2af]">
                <div className="absolute -top-[4px] left-[48px] h-[10px] w-[2px] bg-[#b4b2af]" />
                <div className="absolute -top-[3px] left-[35px] h-2 w-2 rounded-full border border-[#8b8985] bg-white" />
              </div>
              <svg width="9" height="9"><path d="M4.500 0v9M0 4.500h9" stroke="#8b8985" strokeWidth="2" /></svg>
            </div>
            <VLine />
            <div className="pl-[10px] tracking-[-0.100px]">85%</div>
          </div>
        </div>
      </div>
    </div>
  );
}
